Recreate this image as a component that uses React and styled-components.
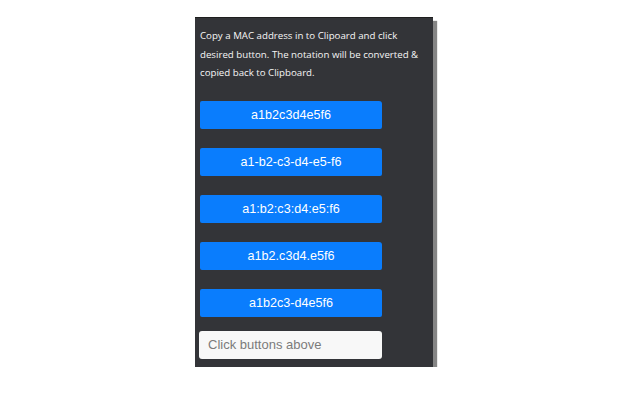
import React, { useState } from "react";
import styled, { createGlobalStyle } from "styled-components";

const GlobalStyle = createGlobalStyle`
    body {
        margin: 0;
        background: #ffffff;
    }
`;

const formats = [
    "a1b2c3d4e5f6",
    "a1-b2-c3-d4-e5-f6",
    "a1:b2:c3:d4:e5:f6",
    "a1b2.c3d4.e5f6",
    "a1b2c3-d4e5f6",
];

const App = () => {
    const [result, setResult] = useState("");

    return (
        <>
            <GlobalStyle />
            <Page>
                <Panel>
                    <Intro>
                        Copy a MAC address in to Clipoard and click desired
                        button. The notation will be converted &amp; copied
                        back to Clipboard.
                    </Intro>
                    <ButtonList>
                        {formats.map((f) => (
                            <FormatButton key={f} onClick={() => setResult(f)}>
                                {f}
                            </FormatButton>
                        ))}
                    </ButtonList>
                    <Output
                        value={result}
                        placeholder="Click buttons above"
                        readOnly
                    />
                </Panel>
            </Page>
        </>
    );
};

export default App;

const Page = styled.div`
    padding: 17px 0 0 195px;
`;

const Panel = styled.div`
    width: 238px;
    height: 350px;
    box-sizing: border-box;
    background-color: #333438;
    border-top: 1px solid #1e1e1e;
    box-shadow: 4px 4px 1px #858585;
    padding: 9px 0 7px 5px;
    display: flex;
    flex-direction: column;
`;

const Intro = styled.p`
    margin: 0;
    width: 224px;
    color: #f6f6f6;
    font-family: "Open Sans", "Noto Sans", sans-serif;
    font-size: 9.7px;
    line-height: 18.5px;
`;

const ButtonList = styled.div`
    margin-top: 18px;
    display: flex;
    flex-direction: column;
    gap: 19px;
`;

const FormatButton = styled.button`
    height: 28px;
    width: 182px;
    border: none;
    border-radius: 2px 3px 2px 2px;
    background-color: #0a7dfd;
    color: #ffffff;
    font-family: "Liberation Sans", Arial, sans-serif;
    font-size: 12.6px;
    padding: 0;
    cursor: pointer;
`;

const Output = styled.input`
    margin-top: 14px;
    height: 28px;
    width: 183px;
    box-sizing: border-box;
    margin-left: -1px;
    border: none;
    border-radius: 3px;
    background-color: #f8f8f8;
    padding: 0 9px;
    font-family: "Liberation Sans", Arial, sans-serif;
    font-size: 13px;
    color: #333;
    outline: none;
    &::placeholder {
        color: #7b7b7b;
    }
`;
